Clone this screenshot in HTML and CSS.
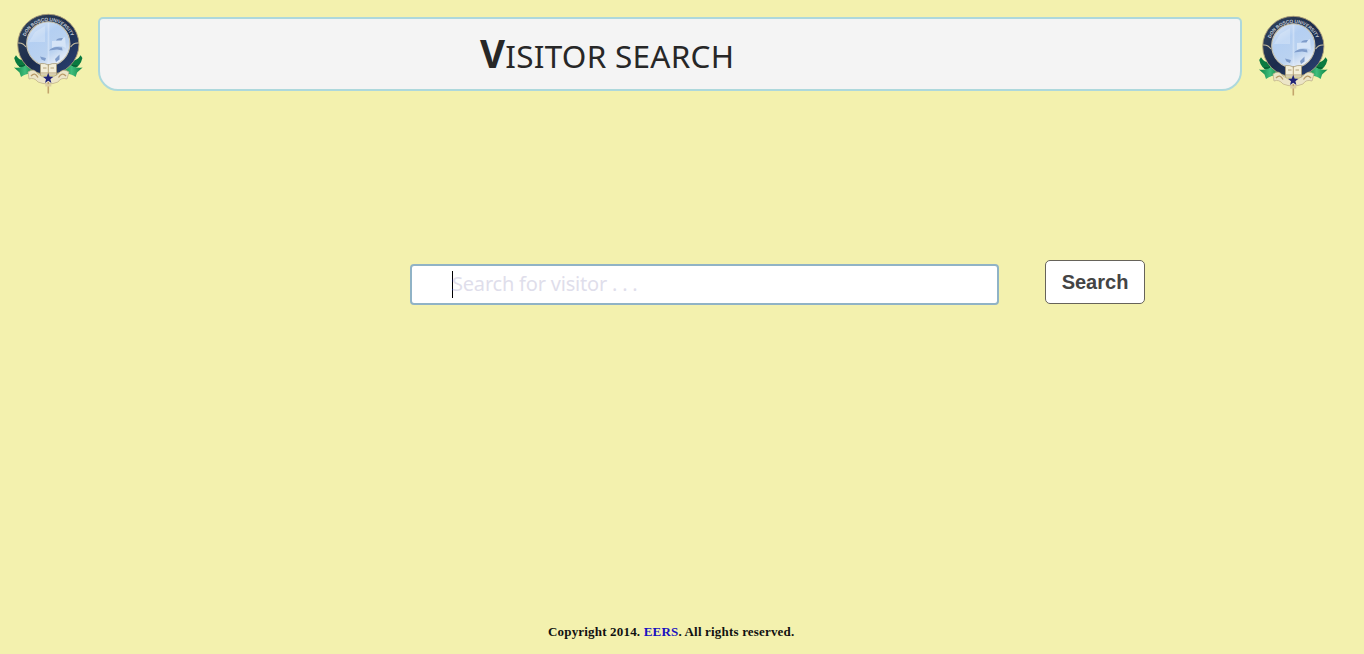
FILE: index.html
```
<!DOCTYPE html>
<html lang="en">
<head>
<meta charset="utf-8">
<title>Visitor Search</title>
<link rel="stylesheet" href="styles.css">
</head>
<body>
<svg class="defs" width="0" height="0" aria-hidden="true">
  <defs>
    <linearGradient id="sky" x1="0" x2="0.6" y1="0" y2="1">
      <stop offset="0" stop-color="#dde8f6"/><stop offset="0.4" stop-color="#b4cff2"/><stop offset="0.75" stop-color="#bad2f0"/><stop offset="1" stop-color="#e6edf7"/>
    </linearGradient>
    <linearGradient id="ring" x1="0" x2="1" y1="0" y2="1">
      <stop offset="0" stop-color="#34465c"/><stop offset="0.5" stop-color="#1c2c4c"/><stop offset="1" stop-color="#2b4377"/>
    </linearGradient>
    <linearGradient id="green" x1="0" x2="1">
      <stop offset="0" stop-color="#0b8443"/><stop offset="0.5" stop-color="#3fbd7c"/><stop offset="1" stop-color="#08763a"/>
    </linearGradient>
    <path id="arc" d="M16.7 38 A24.6 25 0 1 1 65.9 38"/>
    <symbol id="crest" viewBox="0 0 84 92">
      <g id="ribbon">
        <path d="M7.2 50 L9 47.3 Q12 52.5 18 52.5 L26 62 L16 61 Q9 58 7.2 50 Z" fill="#0a7a40"/>
        <path d="M7 59.5 Q15 61 20 55.5 L29 59 V66 Q20 64 14 69 L12.5 64.5 Z" fill="url(#green)"/>
        <path d="M12 58 Q17 59 20 55.5" fill="none" stroke="#075230" stroke-width="1"/>
      </g>
      <use href="#ribbon" transform="translate(82.6 0) scale(-1 1)"/>
      <ellipse cx="41.3" cy="36.5" rx="30.6" ry="30.2" fill="url(#ring)" stroke="#a99c78" stroke-width=".9"/>
      <ellipse cx="41.3" cy="35.8" rx="21.6" ry="22" fill="url(#sky)" stroke="#c9c3ad" stroke-width="1.1"/>
      <path d="M41.5 15 V57" stroke="#e6effb" stroke-width="1.8" opacity=".45"/>
      <path d="M28 24 L38 18 V34 H22 Z" fill="#edf4fc" opacity=".3"/>
      <path d="M45 33 Q52 33 58 29 L59 40 Q52 36 45 40 Z" fill="#d5e4f7"/>
      <path d="M49 32.5 Q50 29.5 56 30 L54.5 32.5 Z M42 42.5 Q46 37.5 55 39.5 L55.5 42.5 L50 41.5 Z M33 48.5 L39 50 L38 53 L34.5 51.5 Z M48 51 L52.5 46.5 V51.5 L49 54 Z" fill="#7f9cca"/>
      <path d="M11.2 35 Q16 34.5 19 39 M71.4 35 Q66.5 34.5 63.6 39" fill="none" stroke="#c7bd9f" stroke-width="1.1"/>
      <text class="motto"><textPath href="#arc" startOffset="50%" text-anchor="middle">DON BOSCO UNIVERSITY</textPath></text>
      <path d="M21 64 Q27 59.5 31 66 Q41 74 51 66 Q56 59.5 62 64 L60 71 Q54 69 51 74 Q41 78 31 74 Q27 69 22 71 Z" fill="#ece5c7" stroke="#bcae84" stroke-width=".7"/>
      <path d="M24 68 Q28 63.5 31 69.5 M51.5 69.5 Q55 63.5 59 68" fill="none" stroke="#b99b68" stroke-width="1.3"/>
      <path d="M33.5 55.5 Q38 55 41.3 57 Q45 55 49.5 55.5 V67 H33.5 Z" fill="#f3eed8" stroke="#a99d78" stroke-width=".8"/>
      <path d="M41.3 56 V67 M36 60 H39.5 M43.5 60 H47 M33.5 65 H49.5" stroke="#a48f62" stroke-width=".8"/>
      <path d="M41.3 74 V85.5" stroke="#c3a56c" stroke-width="1.6"/>
      <path d="M38.3 77.3 H44.3" stroke="#ddcfa2" stroke-width="2.4"/>
      <path d="M41.2 65 L42.6 68.6 L46.4 68.8 L43.4 71.2 L44.4 74.9 L41.2 72.8 L38 74.9 L39 71.2 L36 68.8 L39.8 68.6 Z" fill="#202477"/>
    </symbol>
  </defs>
</svg>
<header class="header">
  <svg class="crest" role="img" aria-label="Don Bosco University"><use href="#crest"/></svg>
  <div class="banner"><h1 class="title">VISITOR SEARCH</h1></div>
  <svg class="crest crest-right" role="img" aria-label="Don Bosco University"><use href="#crest"/></svg>
</header>
<form class="search">
  <div class="field"><span class="caret"></span><span class="hint">Search for visitor . . .</span></div>
  <button class="submit" type="button">Search</button>
</form>
<footer class="footer">Copyright 2014. <a class="link" href="#">EERS</a>. All rights reserved.</footer>
</body>
</html>
```
FILE: styles.css
```
* { box-sizing: border-box; }
body {
  margin: 0;
  height: 654px;
  background: #f3f1ae;
  display: flex;
  flex-direction: column;
  overflow: hidden;
}
.defs { position: absolute; }
.header { display: flex; align-items: flex-start; padding: 8px 0 0 7px; }
.crest { width: 84px; height: 92px; flex: none; }
.crest-right { margin: 2px 0 0 10px; }
.motto { font: bold 4.8px "Liberation Sans", sans-serif; letter-spacing: -0.1px; fill: #c3ccd6; }
.banner {
  width: 1144px;
  height: 74px;
  margin: 9px 0 0 7px;
  padding-left: 380px;
  background: #f4f4f4;
  border: 2px solid #add8dc;
  border-radius: 5px 5px 20px 20px;
}
.title {
  margin: 0;
  font: 400 31.5px/68px "Noto Sans", sans-serif;
  letter-spacing: 0.25px;
  color: #272727;
  white-space: nowrap;
}
.title::first-letter { font-size: 38.5px; font-weight: 700; }
.search { display: flex; align-items: flex-start; margin: 158px 0 0 410px; }
.field {
  display: flex;
  align-items: center;
  width: 589px;
  height: 41px;
  margin-top: 4px;
  padding-left: 40px;
  background: #fff;
  border: 2px solid #90b3c6;
  border-radius: 4px;
}
.caret { width: 1px; height: 27px; margin-right: -1px; background: #000; }
.hint {
  padding-bottom: 2px;
  font: 20px/35px "Noto Sans", sans-serif;
  letter-spacing: -0.2px;
  color: #dfdeeb;
  white-space: nowrap;
}
.submit {
  width: 100px;
  height: 44px;
  margin-left: 46px;
  padding: 0;
  background: #fff;
  border: 1px solid #66635a;
  border-radius: 5px;
  font: bold 20px "Liberation Sans", Arial, sans-serif;
  color: #444;
}
.footer {
  margin: auto 0 14px 548px;
  font: bold 13px/16px "Liberation Serif", "Times New Roman", serif;
  letter-spacing: 0.18px;
  color: #111;
}
.link { color: #1a12c0; text-decoration: none; }
```
